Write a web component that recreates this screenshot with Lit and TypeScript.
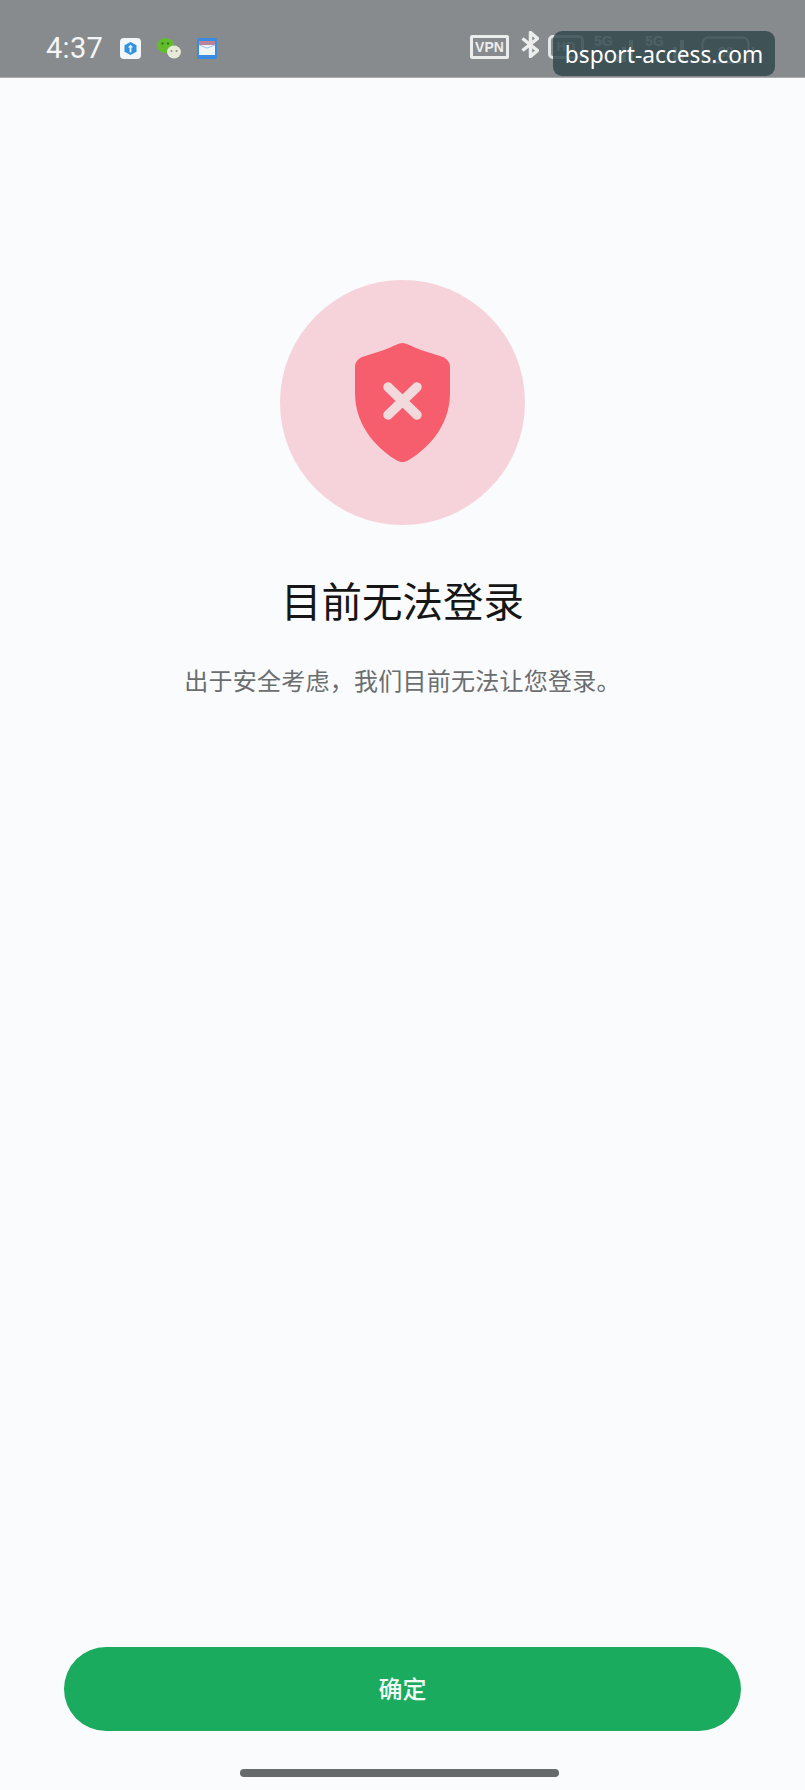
import { LitElement, html, css } from "lit";
import { customElement } from "lit/decorators.js";

@customElement("app-root")
export class AppRoot extends LitElement {
  static styles = css`
    :host {
      display: block;
      width: 805px;
      height: 1790px;
      overflow: hidden;
      background: #f9fbfd;
      font-family: "Noto Sans CJK SC", "Noto Sans", sans-serif;
    }
    .page {
      position: relative;
      height: 1790px;
      display: flex;
      flex-direction: column;
    }
    .status {
      height: 78px;
      flex: none;
      box-sizing: border-box;
      background: #878b8e;
      border-bottom: 1px solid #a9acae;
      padding: 32px 0 0 46px;
      display: flex;
      align-items: flex-start;
      color: #f4f5f5;
    }
    .time {
      font-family: Roboto, sans-serif;
      font-size: 29px;
      line-height: 32px;
      font-weight: 400;
      letter-spacing: 0.3px;
      width: 74px;
      flex: none;
    }
    .apps {
      display: flex;
      gap: 16px;
      margin-top: 6px;
      flex: none;
    }
    .apps svg { display: block; height: 21px; }
    .i1 { width: 21px; }
    .i2 { width: 24px; }
    .i3 { width: 20px; }
    .sys {
      margin-left: 253px;
      margin-top: 3px;
      display: flex;
      align-items: flex-start;
      flex: none;
    }
    .vpn {
      box-sizing: border-box;
      width: 39px;
      height: 24px;
      border: 3px solid #eceded;
      border-radius: 2px;
      font-family: "Liberation Sans", sans-serif;
      font-weight: 700;
      font-size: 14px;
      line-height: 18px;
      text-align: center;
      color: #eceded;
    }
    .bt { width: 18px; height: 27px; display: block; margin: -4px 9px 0 12px; }
    .hd {
      width: 36px;
      height: 24px;
      box-sizing: border-box;
      border: 3px solid #e3e5e6;
      border-radius: 5px;
      font-family: "Liberation Sans", sans-serif;
      font-size: 13px;
      font-weight: 700;
      line-height: 18px;
      text-align: center;
      color: #e3e5e6;
    }
    .sig { display: block; width: 170px; height: 32px; margin: -1px 0 0 0; }
    .sig text {
      font-family: "Liberation Sans", sans-serif;
      font-weight: 700;
      font-size: 14px;
      fill: #eceeef;
    }
    .toast {
      position: absolute;
      left: 553px;
      top: 31px;
      width: 222px;
      height: 45px;
      box-sizing: border-box;
      border-radius: 9px;
      background: rgba(50, 73, 78, 0.85);
      color: #fff;
      font-family: "Noto Sans", sans-serif;
      font-size: 22.7px;
      line-height: 47px;
      text-align: center;
      white-space: nowrap;
    }
    main {
      flex: 1;
      display: flex;
      flex-direction: column;
      align-items: center;
      padding-top: 202px;
      min-height: 0;
    }
    .circle {
      width: 245px;
      height: 245px;
      border-radius: 50%;
      background: #f6d3da;
      display: flex;
      align-items: center;
      justify-content: center;
    }
    .circle svg { width: 95px; height: 119px; display: block; }
    h1 {
      margin: 45px 0 0;
      font-size: 40.5px;
      line-height: 60px;
      font-weight: 400;
      color: #161616;
    }
    p {
      margin: 32px 0 0;
      font-size: 24px;
      line-height: 36px;
      letter-spacing: 0.25px;
      color: #6b6d6e;
    }
    .foot {
      flex: none;
      display: flex;
      flex-direction: column;
      align-items: center;
      padding: 0 64px 13px;
    }
    button {
      width: 100%;
      height: 84px;
      border: 0;
      border-radius: 42px;
      background: #1aab5e;
      color: #f1faf5;
      font-family: inherit;
      font-size: 24px;
      font-weight: 500;
      padding: 0 0 3px;
    }
    .home {
      margin: 38px 6px 0 0;
      width: 319px;
      height: 8px;
      border-radius: 4px;
      background: #666a6b;
    }
  `;

  render() {
    return html`
      <div class="page">
        <div class="status">
          <div class="time">4:37</div>
          <div class="apps">
            <svg class="i1" viewBox="0 0 21 21">
              <rect width="21" height="21" rx="4" fill="#f4f7f9" />
              <path d="M10.500 4l6 3.200v6.600l-6 3.200-6-3.200V7.200z" fill="#2f93e0" />
              <path d="M10.500 6.500l2.600 3h-1.700v5h-1.800v-5H7.900z" fill="#e8f3fb" />
            </svg>
            <svg class="i2" viewBox="0 0 24 21">
              <ellipse cx="8.500" cy="7.500" rx="8.500" ry="7.500" fill="#62bd2c" />
              <circle cx="5.500" cy="5.500" r="1.200" fill="#3a7a18" />
              <circle cx="11" cy="5.500" r="1.200" fill="#3a7a18" />
              <ellipse cx="17" cy="14" rx="7" ry="6.500" fill="#e7ead9" />
              <circle cx="14.500" cy="13" r="1" fill="#8b8f7c" />
              <circle cx="19.500" cy="13" r="1" fill="#8b8f7c" />
            </svg>
            <svg class="i3" viewBox="0 0 20 21">
              <rect width="20" height="21" rx="1.500" fill="#3b8ce0" />
              <rect x="2" y="3" width="16" height="5" fill="#b98498" />
              <rect x="2" y="7" width="16" height="10" fill="#eef5fb" />
              <path d="M2 7l8 3 8-3" fill="none" stroke="#a9cdf0" stroke-width="1.200" />
            </svg>
          </div>
          <div class="sys">
            <div class="vpn">VPN</div>
            <svg class="bt" viewBox="0 0 18 27" fill="none" stroke="#eceded" stroke-width="3.500" stroke-linejoin="round">
              <path d="M1.500 7.500l15 12-7 6V1.500l7 6-15 12" />
            </svg>
            <div class="hd">HD</div>
            <svg class="sig" viewBox="0 0 170 32">
              <text x="10" y="12">5G</text>
              <text x="61" y="12">5G</text>
              <g fill="#eceeef">
                <rect x="31" y="21" width="4" height="7" />
                <rect x="38" y="13" width="4" height="15" />
                <rect x="45" y="6" width="4" height="22" />
                <rect x="82" y="21" width="4" height="7" />
                <rect x="89" y="13" width="4" height="15" />
                <rect x="96" y="6" width="4" height="22" />
                <rect x="168" y="13" width="2" height="10" />
              </g>
              <rect x="118.500" y="3.500" width="46" height="25" rx="6" fill="none" stroke="#eceeef" stroke-width="2" />
              <text x="134" y="23">89</text>
            </svg>
          </div>
        </div>
        <div class="toast">bsport-access.com</div>
        <main>
          <div class="circle">
            <svg viewBox="0 0 95 119">
              <path d="M47.500 0C52 0 58 4 66 7L88 14C92 16 95 19 95 24V50C95 85 70 108 52 118C49 119.500 46 119.500 43 118C25 108 0 85 0 50V24C0 19 3 16 7 14L29 7C37 4 43 0 47.500 0Z" fill="#f65d6d" />
              <path d="M33 44l29 28M62 44L33 72" fill="none" stroke="#f2d9dc" stroke-width="9.500" stroke-linecap="round" />
            </svg>
          </div>
          <h1>目前无法登录</h1>
          <p>出于安全考虑，我们目前无法让您登录。</p>
        </main>
        <div class="foot">
          <button>确定</button>
          <div class="home"></div>
        </div>
      </div>
    `;
  }
}
